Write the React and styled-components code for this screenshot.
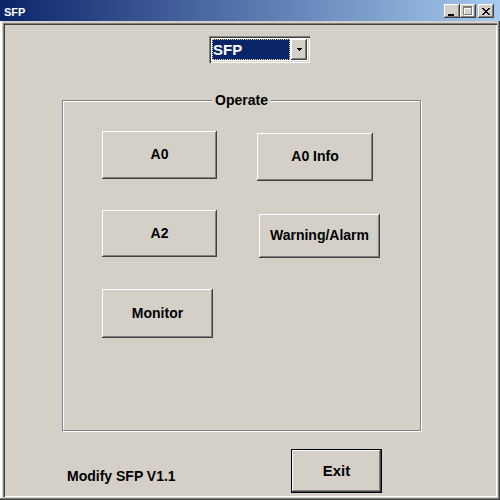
import React from 'react';
import styled, { createGlobalStyle } from 'styled-components';

const FACE = '#d4d0c8';

const GlobalStyle = createGlobalStyle`
    html, body {
        margin: 0;
        padding: 0;
        background: ${FACE};
    }
    body {
        font-family: "Liberation Sans", Arial, sans-serif;
    }
    * {
        box-sizing: border-box;
    }
`;

// classic 3d edges
const raisedEdge = `box-shadow: inset -1px -1px 0 #404040, inset 1px 1px 0 #ffffff, inset -2px -2px 0 #808080, inset 2px 2px 0 ${FACE};`;
const sunkenEdge = `box-shadow: inset 1px 1px 0 #808080, inset 2px 2px 0 #404040, inset -1px -1px 0 #ffffff, inset -2px -2px 0 ${FACE};`;

// tiny pixel glyphs, one string per row, '#' = lit pixel
const PixelGlyph = ({ rows, color = '#000', dx = 0, dy = 0 }) => {
    let d = '';
    rows.forEach((row, y) => {
        [...row].forEach((c, x) => {
            if (c === '#') d += `M${x + dx} ${y + dy}h1v1h-1z`;
        });
    });
    return <path d={d} fill={color} />;
};

const CLOSE_X = ['##....##', '.##..##.', '..####..', '...##...', '..####..', '.##..##.', '##....##'];
const MIN_BAR = ['######', '######'];
const MAX_BOX = ['#########', '#########', '#.......#', '#.......#', '#.......#', '#.......#', '#.......#', '#.......#', '#########'];
const DOWN_ARROW = ['#####', '.###.', '..#..'];

const Window = styled.div`
    width: 500px;
    height: 500px;
    display: flex;
    flex-direction: column;
    padding: 0 3px 3px 3px;
    background: ${FACE};
    box-shadow: inset -1px -1px 0 #404040, inset -2px -2px 0 #808080, inset 2px 2px 0 #ffffff;
`;

const TitleBar = styled.div`
    display: flex;
    align-items: flex-start;
    height: 21px;
    margin: 0 -3px 2px -3px;
    padding: 0 6px 0 4px;
    background: linear-gradient(to right, #0a246a, #a6caf0);
`;

const TitleText = styled.span`
    margin-top: 6px;
    color: #ffffff;
    font-size: 11px;
    font-weight: 700;
    line-height: 13px;
`;

const CaptionButtons = styled.div`
    display: flex;
    margin-left: auto;
    margin-top: 4px;
`;

const CaptionButton = styled.div`
    display: flex;
    align-items: flex-start;
    width: 16px;
    height: 14px;
    margin-left: ${(p) => p.$gap || 0}px;
    padding: ${(p) => p.$pad};
    background: ${FACE};
    ${raisedEdge}
`;

const Client = styled.div`
    flex: 1;
    display: flex;
    flex-direction: column;
    align-items: flex-start;
    padding: 13px 0 0 59px;
    ${sunkenEdge}
`;

const Combo = styled.div`
    display: flex;
    gap: 1px;
    width: 101px;
    height: 27px;
    margin-left: 147px;
    padding: 3px;
    background: #ffffff;
    ${sunkenEdge}
`;

const ComboValue = styled.div`
    flex: 1;
    padding-left: 1px;
    background: #0a246a;
    outline: 1px dotted #e6d690;
    outline-offset: -1px;
    color: #ffffff;
    font-size: 15px;
    font-weight: 700;
    line-height: 21px;
`;

const ComboArrow = styled.div`
    display: flex;
    align-items: center;
    justify-content: center;
    width: 16px;
    background: ${FACE};
    ${raisedEdge}
`;

const GroupBox = styled.fieldset`
    width: 359px;
    min-width: 0;
    margin: 29px 0 0 0;
    padding: 0;
    border: 1px solid #808080;
    box-shadow: 1px 1px 0 #ffffff, inset 1px 1px 0 #ffffff;
`;

const GroupTitle = styled.legend`
    margin: 0 auto;
    padding: 0 3px;
    background: ${FACE};
    color: #000000;
    font-size: 14px;
    font-weight: 700;
    line-height: 17px;
`;

const GroupBody = styled.div`
    display: flex;
    flex-direction: column;
    height: 321px;
    padding-left: 39px;
`;

const ButtonRow = styled.div`
    display: flex;
    align-items: flex-start;
    margin-top: ${(p) => p.$top}px;
`;

const PushButton = styled.button`
    display: flex;
    align-items: center;
    justify-content: center;
    flex-shrink: 0;
    width: ${(p) => p.$w}px;
    height: ${(p) => p.$h}px;
    margin: ${(p) => p.$dy || 0}px 0 0 ${(p) => p.$dx || 0}px;
    padding: 0 0 2px 0;
    border: none;
    background: ${FACE};
    color: #000000;
    font-family: "Liberation Sans", Arial, sans-serif;
    font-size: ${(p) => p.$size || 14}px;
    font-weight: 700;
    ${raisedEdge}
`;

const DefaultButton = styled(PushButton)`
    border: 1px solid #000000;
`;

const Footer = styled.div`
    display: flex;
    align-items: flex-start;
    margin: 18px 0 0 5px;
`;

const VersionText = styled.span`
    width: 224px;
    margin-top: 19px;
    color: #000000;
    font-size: 14px;
    font-weight: 700;
    line-height: 16px;
`;

const App = () => {
    return (
        <>
            <GlobalStyle />
            <Window>
                <TitleBar>
                    <TitleText>SFP</TitleText>
                    <CaptionButtons>
                        <CaptionButton $pad="10px 0 0 4px">
                            <svg width="6" height="2" shapeRendering="crispEdges">
                                <PixelGlyph rows={MIN_BAR} />
                            </svg>
                        </CaptionButton>
                        <CaptionButton $pad="2px 0 0 3px">
                            <svg width="10" height="10" shapeRendering="crispEdges">
                                <PixelGlyph rows={MAX_BOX} color="#ffffff" dx={1} dy={1} />
                                <PixelGlyph rows={MAX_BOX} color="#808080" />
                            </svg>
                        </CaptionButton>
                        <CaptionButton $gap={2} $pad="4px 0 0 4px">
                            <svg width="8" height="7" shapeRendering="crispEdges">
                                <PixelGlyph rows={CLOSE_X} />
                            </svg>
                        </CaptionButton>
                    </CaptionButtons>
                </TitleBar>
                <Client>
                    <Combo>
                        <ComboValue>SFP</ComboValue>
                        <ComboArrow>
                            <svg width="5" height="3" shapeRendering="crispEdges">
                                <PixelGlyph rows={DOWN_ARROW} />
                            </svg>
                        </ComboArrow>
                    </Combo>
                    <GroupBox>
                        <GroupTitle>Operate</GroupTitle>
                        <GroupBody>
                            <ButtonRow $top={22}>
                                <PushButton $w={115} $h={48}>A0</PushButton>
                                <PushButton $w={116} $h={48} $dx={40} $dy={2}>A0 Info</PushButton>
                            </ButtonRow>
                            <ButtonRow $top={29}>
                                <PushButton $w={115} $h={47}>A2</PushButton>
                                <PushButton $w={121} $h={44} $dx={42} $dy={4}>Warning/Alarm</PushButton>
                            </ButtonRow>
                            <ButtonRow $top={31}>
                                <PushButton $w={111} $h={49}>Monitor</PushButton>
                            </ButtonRow>
                        </GroupBody>
                    </GroupBox>
                    <Footer>
                        <VersionText>Modify SFP V1.1</VersionText>
                        <DefaultButton $w={91} $h={44} $size={15}>Exit</DefaultButton>
                    </Footer>
                </Client>
            </Window>
        </>
    );
};

export default App;
